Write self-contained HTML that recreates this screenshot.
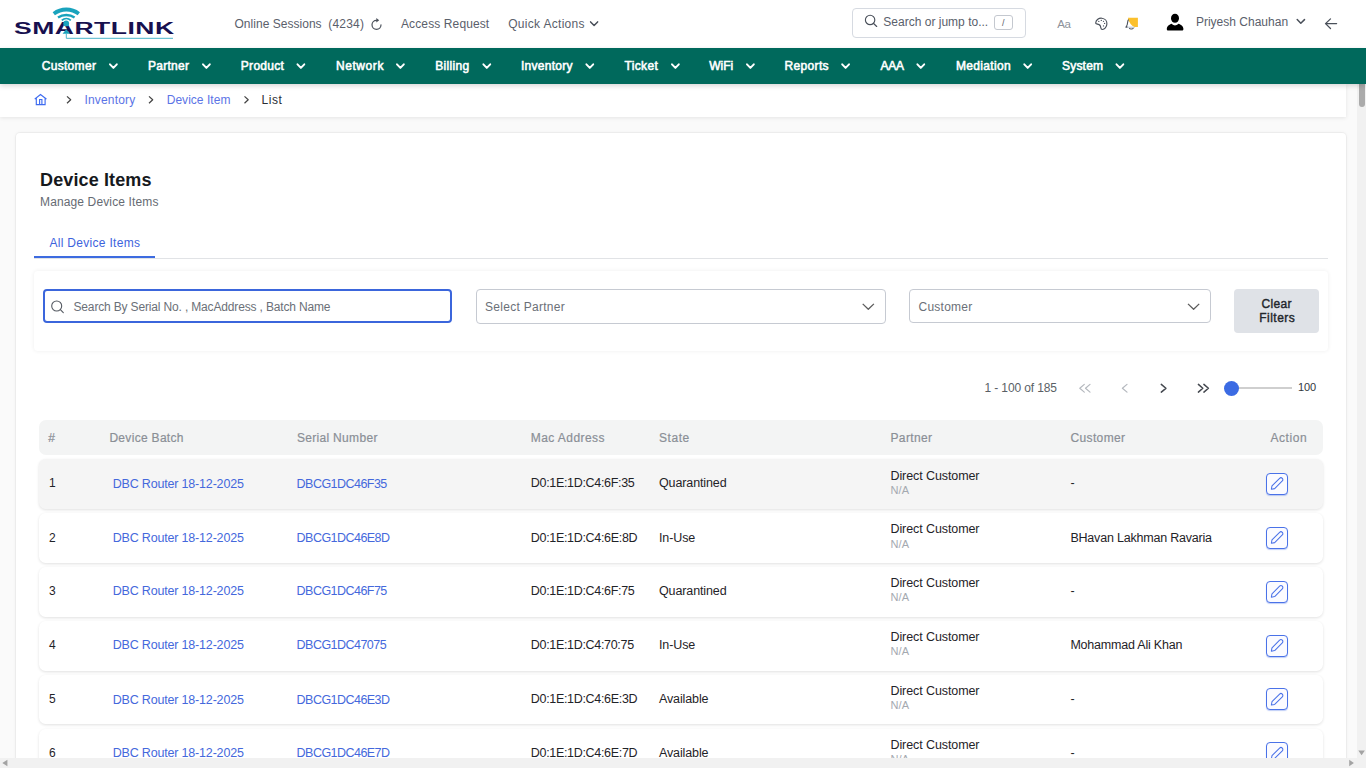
<!DOCTYPE html>
<html lang="en">
<head>
<meta charset="utf-8">
<title>Device Items</title>
<style>
*{box-sizing:border-box;margin:0;padding:0}
html,body{width:1366px;height:768px;overflow:hidden}
body{font-family:"Liberation Sans",sans-serif;background:#fafafa;color:#1f2328;position:relative;font-size:12px}
.b{position:absolute}
.t{position:absolute;white-space:pre;line-height:16px;z-index:5}
svg{position:absolute;overflow:visible}
#top{left:0;top:0;width:1366px;height:48px;background:#fff}
#nav{left:0;top:48px;width:1366px;height:36px;background:#00695c;box-shadow:0 2px 5px rgba(0,0,0,.16);z-index:3}
#crumb{left:0;top:84px;width:1346px;height:33px;background:#fff;box-shadow:0 1px 4px rgba(0,0,0,.09)}
#card{left:15.7px;top:132.8px;width:1330.4px;height:700px;background:#fff;border-radius:4px;box-shadow:0 0 0 1px rgba(0,0,0,.035),0 0 4px rgba(0,0,0,.05)}
#vs{left:1357px;top:84px;width:9px;height:674px;background:#f1f1f1;z-index:1}
#vthumb{left:1358.6px;top:80px;width:6.2px;height:27px;background:#ababab;border-radius:3px;z-index:2}
#hs{left:0;top:758px;width:1366px;height:10px;background:#f1f1f1;z-index:9}
#sbox{left:852px;top:8px;width:174px;height:30px;border:1px solid #d6dae1;border-radius:4px;background:#fff}
#kbd{left:994px;top:15px;width:19px;height:15px;border:1px solid #c4c8cf;border-radius:3px;background:#fff}
#tabline{left:34px;top:258px;width:1294px;height:1px;background:#e1e3e6}
#tabul{left:34px;top:256px;width:121px;height:2px;background:#3d6be0}
#fbox{left:33.6px;top:270.6px;width:1294.2px;height:80.2px;background:#fff;border-radius:4px;box-shadow:0 0 4px rgba(0,0,0,.075)}
#f1{left:42.6px;top:289px;width:409.4px;height:34px;border:2px solid #3b66dc;border-radius:4px;background:#fff}
#f2{left:476px;top:289px;width:410px;height:35px;border:1px solid #c6cad2;border-radius:4px;background:#fff}
#f3{left:909px;top:289px;width:302px;height:34px;border:1px solid #c6cad2;border-radius:4px;background:#fff}
#clr{left:1234px;top:289px;width:85px;height:44px;background:#dfe2e7;border-radius:4px}
#track{left:1238px;top:387px;width:54px;height:2px;background:#cfcfcf}
#thumb{left:1224px;top:381px;width:15px;height:15px;border-radius:50%;background:#3b6be3}
#logo{left:13.6px;top:18.6px;font-size:15.6px;font-weight:bold;color:#17104f;line-height:20px;letter-spacing:0.3px;transform-origin:0 0;transform:scaleX(1.70);white-space:nowrap;z-index:3}
.hdr{left:39px;top:420px;width:1284px;height:35px;background:#f3f4f4;border-radius:7px}
.row{left:39px;width:1284px;height:49.95px;background:#fff;border-radius:6.5px;box-shadow:0 1px 3px rgba(0,0,0,.12)}
.row.hov{background:#f5f5f5}
.edit{left:1266px;width:22px;height:22px;border:1px solid #4a72e8;border-radius:4px;background:#fbfbff;box-shadow:0 1px 1px rgba(74,114,232,.35)}
</style>
</head>
<body>
<div class="b" id="top"></div>
<div class="b" id="nav"></div>
<div class="b" id="crumb"></div>
<div class="b" id="card"></div>
<div class="b" id="sbox"></div>
<div class="b" id="kbd"></div>
<div class="b" id="tabline"></div>
<div class="b" id="tabul"></div>
<div class="b" id="fbox"></div>
<div class="b" id="f1"></div>
<div class="b" id="f2"></div>
<div class="b" id="f3"></div>
<div class="b" id="clr"></div>
<div class="b" id="track"></div>
<div class="b" id="thumb"></div>
<div class="b hdr"></div>
<div class="b" id="logo">SMARTLINK</div>
<div class="b row hov" style="top:458.75px"></div><div class="b edit" style="top:472.65px"></div>
<div class="b row" style="top:512.70px"></div><div class="b edit" style="top:526.60px"></div>
<div class="b row" style="top:566.65px"></div><div class="b edit" style="top:580.55px"></div>
<div class="b row" style="top:620.60px"></div><div class="b edit" style="top:634.50px"></div>
<div class="b row" style="top:674.55px"></div><div class="b edit" style="top:688.45px"></div>
<div class="b row" style="top:728.50px"></div><div class="b edit" style="top:742.40px"></div>
<svg width="1366" height="768" viewBox="0 0 1366 768" style="left:0;top:0;z-index:4" fill="none" stroke-linecap="round" stroke-linejoin="round">
<g id="logo-mark" stroke="#19a3bd" stroke-linecap="butt">
<path d="M53.8 13.7 A20.7 20.7 0 0 1 78.8 13.7" stroke-width="3.8"/>
<path d="M58 17.6 A14.5 14.5 0 0 1 74.6 17.6" stroke-width="2.4"/>
<path d="M61.8 20.3 A6.8 6.8 0 0 1 70.8 20.3" stroke-width="1.8"/>
<circle cx="66.2" cy="23.4" r="2.9" fill="#19a3bd" stroke="none"/>
<path d="M66.3 29.2 L70.2 33.8 L62.5 33.8 Z" fill="#19a3bd" stroke="none"/>
<path d="M66.3 33.5 V38.3 H173" stroke="#4ab4ca" stroke-width="1"/>
</g>
<path d="M381 24.8 A4.5 4.5 0 1 1 376.5 20.3" stroke="#4a505a" stroke-width="1.2"/>
<path d="M376.3 18.1 L379.2 20.3 L376.3 22.6 Z" fill="#4a505a" stroke="none"/>
<path d="M590.6 21.9 L594.1 25.5 L597.6 21.9" stroke="#4a505a" stroke-width="1.5"/>
<circle cx="870.1" cy="19.9" r="4.7" stroke="#4a505a" stroke-width="1.15"/><path d="M873.6 23.5 L876.7 26.5" stroke="#4a505a" stroke-width="1.15"/>
<path d="M1095.7 23 C1095.9 19.6 1099 17.9 1101.8 18.2 C1105 18.5 1107.1 20.9 1106.9 24 C1106.7 27 1104.5 29.3 1102.4 29.5 C1100.7 29.6 1100.9 27.8 1100.5 26.3 C1100.1 24.7 1098.5 24.2 1096.7 23.9 C1096 23.8 1095.7 23.5 1095.7 23 Z" stroke="#4a505a" stroke-width="1.15"/>
<circle cx="1101.3" cy="20.4" r=".65" fill="#4a505a"/>
<circle cx="1098.8" cy="21.4" r=".65" fill="#4a505a"/>
<circle cx="1103.5" cy="21.3" r=".65" fill="#4a505a"/>
<circle cx="1104.6" cy="23.4" r=".65" fill="#4a505a"/>
<circle cx="1103.5" cy="25.9" r=".65" fill="#4a505a"/>
<path d="M1131.5 18.6 C1128.7 18.6 1127.7 20.5 1127.6 22.5 C1127.5 24.6 1127.1 26 1125.9 27.1 H1127.4 M1129.5 28.2 C1130 29.3 1132.6 29.3 1133.2 28.2" stroke="#4a505a" stroke-width="1.1"/>
<path d="M1127.4 27.2 H1134.5" stroke="#b9c1cf" stroke-width="1"/>
<path d="M1128 17.8 H1137.9 V27.1 H1134.6 C1131.3 25.6 1129 22.5 1128.3 19 Z" fill="#fbc02d"/>
<ellipse cx="1175" cy="18.2" rx="4" ry="4.55" fill="#000"/>
<path d="M1166.8 29 C1166.8 26 1169.5 24.3 1171.7 23.7 C1172.7 25 1174 25.4 1175 25.4 C1176 25.4 1177.4 25 1178.4 23.7 C1180.7 24.3 1183.4 26 1183.4 29 C1183.4 30 1182.8 30.5 1182 30.5 L1168.2 30.5 C1167.4 30.5 1166.8 30 1166.8 29Z" fill="#000"/>
<path d="M1297.2 19.6 L1300.8 23.3 L1304.5 19.6" stroke="#4a505a" stroke-width="1.5"/>
<path d="M1336.6 23.6 H1325.6 M1330.5 18.9 L1325.5 23.6 L1330.5 28.5" stroke="#4a505a" stroke-width="1.3"/>
<path d="M110.0 64.3 L113.4 67.9 L116.8 64.3" stroke="#fff" stroke-width="1.95"/>
<path d="M203.0 64.3 L206.4 67.9 L209.8 64.3" stroke="#fff" stroke-width="1.95"/>
<path d="M297.5 64.3 L300.9 67.9 L304.3 64.3" stroke="#fff" stroke-width="1.95"/>
<path d="M397.0 64.3 L400.4 67.9 L403.8 64.3" stroke="#fff" stroke-width="1.95"/>
<path d="M483.4 64.3 L486.8 67.9 L490.2 64.3" stroke="#fff" stroke-width="1.95"/>
<path d="M586.4 64.3 L589.8 67.9 L593.2 64.3" stroke="#fff" stroke-width="1.95"/>
<path d="M672.0 64.3 L675.4 67.9 L678.8 64.3" stroke="#fff" stroke-width="1.95"/>
<path d="M747.0 64.3 L750.4 67.9 L753.8 64.3" stroke="#fff" stroke-width="1.95"/>
<path d="M842.2 64.3 L845.6 67.9 L849.0 64.3" stroke="#fff" stroke-width="1.95"/>
<path d="M917.4 64.3 L920.8 67.9 L924.2 64.3" stroke="#fff" stroke-width="1.95"/>
<path d="M1024.3 64.3 L1027.7 67.9 L1031.1 64.3" stroke="#fff" stroke-width="1.95"/>
<path d="M1116.5 64.3 L1119.9 67.9 L1123.3 64.3" stroke="#fff" stroke-width="1.95"/>
<path d="M35.2 98.8 L40.5 94.5 L46 98.8 M36.3 98.2 V104.6 H45.1 V98.2 M39.6 104.4 V99.5 H41.9 V104.4" stroke="#3f6cf0" stroke-width="1.15" stroke-linecap="square" stroke-linejoin="miter"/>
<path d="M67 96.4 L70.7 99.8 L67 103.3" stroke="#444" stroke-width="1.2" stroke-linecap="butt"/>
<path d="M149 96.4 L152.7 99.8 L149 103.3" stroke="#444" stroke-width="1.2" stroke-linecap="butt"/>
<path d="M244.5 96.4 L248.2 99.8 L244.5 103.3" stroke="#444" stroke-width="1.2" stroke-linecap="butt"/>
<circle cx="56.7" cy="306" r="5" stroke="#555a62" stroke-width="1.1"/><path d="M60.4 309.7 L63.3 312.6" stroke="#555a62" stroke-width="1.1"/>
<path d="M862.7 303.9 L868.3 309.3 L873.9 303.9" stroke="#5c5c5c" stroke-width="1.3" stroke-linecap="butt"/>
<path d="M1188 303.9 L1193.6 309.3 L1199.2 303.9" stroke="#5c5c5c" stroke-width="1.3" stroke-linecap="butt"/>
<path d="M1084.3 384.4 L1079.8 388.3 L1084.3 392.1 M1090 384.4 L1085.5 388.3 L1090 392.1 M1127 384.4 L1122.4 388.3 L1127 392.1" stroke="#b4b8be" stroke-width="1.2"/>
<path d="M1161.3 384.4 L1165.9 388.3 L1161.3 392.1 M1198.4 384.4 L1202.8 388.3 L1198.4 392.1 M1203.9 384.4 L1208.4 388.3 L1203.9 392.1" stroke="#44484f" stroke-width="1.5"/>
<g transform="translate(1277 483.6) rotate(-45)"><path d="M-8 0 L-5.2 -1.9 H5.6 A1.9 1.9 0 0 1 5.6 1.9 H-5.2 Z" stroke="#4a72e8" stroke-width="1.05"/></g>
<g transform="translate(1277 537.6) rotate(-45)"><path d="M-8 0 L-5.2 -1.9 H5.6 A1.9 1.9 0 0 1 5.6 1.9 H-5.2 Z" stroke="#4a72e8" stroke-width="1.05"/></g>
<g transform="translate(1277 591.5) rotate(-45)"><path d="M-8 0 L-5.2 -1.9 H5.6 A1.9 1.9 0 0 1 5.6 1.9 H-5.2 Z" stroke="#4a72e8" stroke-width="1.05"/></g>
<g transform="translate(1277 645.5) rotate(-45)"><path d="M-8 0 L-5.2 -1.9 H5.6 A1.9 1.9 0 0 1 5.6 1.9 H-5.2 Z" stroke="#4a72e8" stroke-width="1.05"/></g>
<g transform="translate(1277 699.4) rotate(-45)"><path d="M-8 0 L-5.2 -1.9 H5.6 A1.9 1.9 0 0 1 5.6 1.9 H-5.2 Z" stroke="#4a72e8" stroke-width="1.05"/></g>
<g transform="translate(1277 753.4) rotate(-45)"><path d="M-8 0 L-5.2 -1.9 H5.6 A1.9 1.9 0 0 1 5.6 1.9 H-5.2 Z" stroke="#4a72e8" stroke-width="1.05"/></g>
</svg>
<span class="t" style="left:234.5px;top:16.1px;font-size:12px;color:#5a606b;letter-spacing:0.027px">Online Sessions</span>
<span class="t" style="left:328.2px;top:16.1px;font-size:12px;color:#5a606b;letter-spacing:0.223px">(4234)</span>
<span class="t" style="left:401.0px;top:16.1px;font-size:12px;color:#5a606b;letter-spacing:0.114px">Access Request</span>
<span class="t" style="left:508.2px;top:16.1px;font-size:12px;color:#5a606b;letter-spacing:0.308px">Quick Actions</span>
<span class="t" style="left:883.3px;top:14.1px;font-size:12px;color:#5a606b;letter-spacing:0.01px">Search or jump to...</span>
<span class="t" style="left:1002.0px;top:15.1px;font-size:9px;color:#5a606b;letter-spacing:0.984px">/</span>
<span class="t" style="left:1057.2px;top:16.3px;font-size:11.5px;color:#8d929a;letter-spacing:-0.278px">Aa</span>
<span class="t" style="left:1195.9px;top:14.1px;font-size:12px;color:#5a606b;letter-spacing:0.01px">Priyesh Chauhan</span>
<span class="t" style="left:41.7px;top:58.1px;font-size:12px;color:#ffffff;letter-spacing:0.312px;-webkit-text-stroke:0.55px #ffffff">Customer</span>
<span class="t" style="left:148.0px;top:58.1px;font-size:12px;color:#ffffff;letter-spacing:0.273px;-webkit-text-stroke:0.55px #ffffff">Partner</span>
<span class="t" style="left:240.8px;top:58.1px;font-size:12px;color:#ffffff;letter-spacing:0.29px;-webkit-text-stroke:0.55px #ffffff">Product</span>
<span class="t" style="left:336.0px;top:58.1px;font-size:12px;color:#ffffff;letter-spacing:0.564px;-webkit-text-stroke:0.55px #ffffff">Network</span>
<span class="t" style="left:435.2px;top:58.1px;font-size:12px;color:#ffffff;letter-spacing:0.331px;-webkit-text-stroke:0.55px #ffffff">Billing</span>
<span class="t" style="left:521.0px;top:58.1px;font-size:12px;color:#ffffff;letter-spacing:0.28px;-webkit-text-stroke:0.55px #ffffff">Inventory</span>
<span class="t" style="left:624.4px;top:58.1px;font-size:12px;color:#ffffff;letter-spacing:0.367px;-webkit-text-stroke:0.55px #ffffff">Ticket</span>
<span class="t" style="left:709.3px;top:58.1px;font-size:12px;color:#ffffff;letter-spacing:0.0px;-webkit-text-stroke:0.55px #ffffff">WiFi</span>
<span class="t" style="left:784.6px;top:58.1px;font-size:12px;color:#ffffff;letter-spacing:0.328px;-webkit-text-stroke:0.55px #ffffff">Reports</span>
<span class="t" style="left:880.4px;top:58.1px;font-size:12px;color:#ffffff;letter-spacing:-0.158px;-webkit-text-stroke:0.55px #ffffff">AAA</span>
<span class="t" style="left:956.0px;top:58.1px;font-size:12px;color:#ffffff;letter-spacing:0.334px;-webkit-text-stroke:0.55px #ffffff">Mediation</span>
<span class="t" style="left:1062.0px;top:58.1px;font-size:12px;color:#ffffff;letter-spacing:0.197px;-webkit-text-stroke:0.55px #ffffff">System</span>
<span class="t" style="left:84.4px;top:92.1px;font-size:12px;color:#5b74e6;letter-spacing:0.193px">Inventory</span>
<span class="t" style="left:166.7px;top:92.1px;font-size:12px;color:#5b74e6;letter-spacing:0.034px">Device Item</span>
<span class="t" style="left:261.6px;top:92.1px;font-size:12px;color:#2a2e34;letter-spacing:0.504px">List</span>
<span class="t" style="left:40.0px;top:172.0px;font-size:18px;color:#16191d;letter-spacing:0.129px;font-weight:bold">Device Items</span>
<span class="t" style="left:40.0px;top:194.1px;font-size:12px;color:#666b73;letter-spacing:0.13px">Manage Device Items</span>
<span class="t" style="left:49.5px;top:235.1px;font-size:12px;color:#3d63dd;letter-spacing:0.298px">All Device Items</span>
<span class="t" style="left:73.5px;top:299.1px;font-size:12px;color:#6b7078;letter-spacing:-0.158px">Search By Serial No. , MacAddress , Batch Name</span>
<span class="t" style="left:485.1px;top:299.1px;font-size:12px;color:#6b7078;letter-spacing:0.273px">Select Partner</span>
<span class="t" style="left:918.5px;top:299.1px;font-size:12px;color:#6b7078;letter-spacing:0.255px">Customer</span>
<span class="t" style="left:1261.6px;top:296.1px;font-size:12px;color:#22262b;letter-spacing:0.328px;-webkit-text-stroke:0.4px #22262b">Clear</span>
<span class="t" style="left:1259.3px;top:310.1px;font-size:12px;color:#22262b;letter-spacing:0.471px;-webkit-text-stroke:0.4px #22262b">Filters</span>
<span class="t" style="left:984.5px;top:380.1px;font-size:12px;color:#5a5f66;letter-spacing:-0.12px">1 - 100 of 185</span>
<span class="t" style="left:1298.0px;top:379.0px;font-size:11px;color:#33373d;letter-spacing:-0.18px">100</span>
<span class="t" style="left:48.2px;top:430.1px;font-size:12px;color:#8a8f96;letter-spacing:-0.488px;-webkit-text-stroke:0.2px #8a8f96">#</span>
<span class="t" style="left:109.4px;top:430.1px;font-size:12px;color:#8a8f96;letter-spacing:0.309px;-webkit-text-stroke:0.2px #8a8f96">Device Batch</span>
<span class="t" style="left:296.9px;top:430.1px;font-size:12px;color:#8a8f96;letter-spacing:0.316px;-webkit-text-stroke:0.2px #8a8f96">Serial Number</span>
<span class="t" style="left:530.8px;top:430.1px;font-size:12px;color:#8a8f96;letter-spacing:0.433px;-webkit-text-stroke:0.2px #8a8f96">Mac Address</span>
<span class="t" style="left:659.0px;top:430.1px;font-size:12px;color:#8a8f96;letter-spacing:0.542px;-webkit-text-stroke:0.2px #8a8f96">State</span>
<span class="t" style="left:890.5px;top:430.1px;font-size:12px;color:#8a8f96;letter-spacing:0.357px;-webkit-text-stroke:0.2px #8a8f96">Partner</span>
<span class="t" style="left:1070.4px;top:430.1px;font-size:12px;color:#8a8f96;letter-spacing:0.383px;-webkit-text-stroke:0.2px #8a8f96">Customer</span>
<span class="t" style="left:1270.4px;top:430.1px;font-size:12px;color:#8a8f96;letter-spacing:0.568px;-webkit-text-stroke:0.2px #8a8f96">Action</span>
<span class="t" style="left:48.9px;top:475.1px;font-size:12px;color:#1f2328;letter-spacing:0.0px">1</span>
<span class="t" style="left:112.7px;top:475.9px;font-size:12.5px;color:#4468dc;letter-spacing:-0.18px">DBC Router 18-12-2025</span>
<span class="t" style="left:296.6px;top:475.9px;font-size:12.5px;color:#4468dc;letter-spacing:-0.534px">DBCG1DC46F35</span>
<span class="t" style="left:530.8px;top:474.9px;font-size:12.5px;color:#1f2328;letter-spacing:-0.318px">D0:1E:1D:C4:6F:35</span>
<span class="t" style="left:659.0px;top:474.9px;font-size:12.5px;color:#1f2328;letter-spacing:-0.121px">Quarantined</span>
<span class="t" style="left:890.5px;top:467.9px;font-size:12.5px;color:#1f2328;letter-spacing:-0.093px">Direct Customer</span>
<span class="t" style="left:890.5px;top:482.4px;font-size:11px;color:#a4a9b0;letter-spacing:0.078px">N/A</span>
<span class="t" style="left:1070.4px;top:474.9px;font-size:12.5px;color:#1f2328;letter-spacing:-0.206px">-</span>
<span class="t" style="left:48.9px;top:530.1px;font-size:12px;color:#1f2328;letter-spacing:0.0px">2</span>
<span class="t" style="left:112.7px;top:529.9px;font-size:12.5px;color:#4468dc;letter-spacing:-0.18px">DBC Router 18-12-2025</span>
<span class="t" style="left:296.6px;top:529.9px;font-size:12.5px;color:#4468dc;letter-spacing:-0.534px">DBCG1DC46E8D</span>
<span class="t" style="left:530.8px;top:529.9px;font-size:12.5px;color:#1f2328;letter-spacing:-0.318px">D0:1E:1D:C4:6E:8D</span>
<span class="t" style="left:659.0px;top:529.9px;font-size:12.5px;color:#1f2328;letter-spacing:-0.121px">In-Use</span>
<span class="t" style="left:890.5px;top:520.9px;font-size:12.5px;color:#1f2328;letter-spacing:-0.093px">Direct Customer</span>
<span class="t" style="left:890.5px;top:536.4px;font-size:11px;color:#a4a9b0;letter-spacing:0.078px">N/A</span>
<span class="t" style="left:1070.4px;top:529.9px;font-size:12.5px;color:#1f2328;letter-spacing:-0.206px">BHavan Lakhman Ravaria</span>
<span class="t" style="left:48.9px;top:583.1px;font-size:12px;color:#1f2328;letter-spacing:0.0px">3</span>
<span class="t" style="left:112.7px;top:582.9px;font-size:12.5px;color:#4468dc;letter-spacing:-0.18px">DBC Router 18-12-2025</span>
<span class="t" style="left:296.6px;top:582.9px;font-size:12.5px;color:#4468dc;letter-spacing:-0.534px">DBCG1DC46F75</span>
<span class="t" style="left:530.8px;top:582.9px;font-size:12.5px;color:#1f2328;letter-spacing:-0.318px">D0:1E:1D:C4:6F:75</span>
<span class="t" style="left:659.0px;top:582.9px;font-size:12.5px;color:#1f2328;letter-spacing:-0.121px">Quarantined</span>
<span class="t" style="left:890.5px;top:574.9px;font-size:12.5px;color:#1f2328;letter-spacing:-0.093px">Direct Customer</span>
<span class="t" style="left:890.5px;top:589.4px;font-size:11px;color:#a4a9b0;letter-spacing:0.078px">N/A</span>
<span class="t" style="left:1070.4px;top:582.9px;font-size:12.5px;color:#1f2328;letter-spacing:-0.206px">-</span>
<span class="t" style="left:48.9px;top:637.1px;font-size:12px;color:#1f2328;letter-spacing:0.0px">4</span>
<span class="t" style="left:112.7px;top:636.9px;font-size:12.5px;color:#4468dc;letter-spacing:-0.18px">DBC Router 18-12-2025</span>
<span class="t" style="left:296.6px;top:636.9px;font-size:12.5px;color:#4468dc;letter-spacing:-0.534px">DBCG1DC47075</span>
<span class="t" style="left:530.8px;top:636.9px;font-size:12.5px;color:#1f2328;letter-spacing:-0.318px">D0:1E:1D:C4:70:75</span>
<span class="t" style="left:659.0px;top:636.9px;font-size:12.5px;color:#1f2328;letter-spacing:-0.121px">In-Use</span>
<span class="t" style="left:890.5px;top:628.9px;font-size:12.5px;color:#1f2328;letter-spacing:-0.093px">Direct Customer</span>
<span class="t" style="left:890.5px;top:643.4px;font-size:11px;color:#a4a9b0;letter-spacing:0.078px">N/A</span>
<span class="t" style="left:1070.4px;top:636.9px;font-size:12.5px;color:#1f2328;letter-spacing:-0.206px">Mohammad Ali Khan</span>
<span class="t" style="left:48.9px;top:691.1px;font-size:12px;color:#1f2328;letter-spacing:0.0px">5</span>
<span class="t" style="left:112.7px;top:691.9px;font-size:12.5px;color:#4468dc;letter-spacing:-0.18px">DBC Router 18-12-2025</span>
<span class="t" style="left:296.6px;top:691.9px;font-size:12.5px;color:#4468dc;letter-spacing:-0.534px">DBCG1DC46E3D</span>
<span class="t" style="left:530.8px;top:690.9px;font-size:12.5px;color:#1f2328;letter-spacing:-0.318px">D0:1E:1D:C4:6E:3D</span>
<span class="t" style="left:659.0px;top:690.9px;font-size:12.5px;color:#1f2328;letter-spacing:-0.121px">Available</span>
<span class="t" style="left:890.5px;top:682.9px;font-size:12.5px;color:#1f2328;letter-spacing:-0.093px">Direct Customer</span>
<span class="t" style="left:890.5px;top:697.4px;font-size:11px;color:#a4a9b0;letter-spacing:0.078px">N/A</span>
<span class="t" style="left:1070.4px;top:690.9px;font-size:12.5px;color:#1f2328;letter-spacing:-0.206px">-</span>
<span class="t" style="left:48.9px;top:745.1px;font-size:12px;color:#1f2328;letter-spacing:0.0px">6</span>
<span class="t" style="left:112.7px;top:744.9px;font-size:12.5px;color:#4468dc;letter-spacing:-0.18px">DBC Router 18-12-2025</span>
<span class="t" style="left:296.6px;top:744.9px;font-size:12.5px;color:#4468dc;letter-spacing:-0.534px">DBCG1DC46E7D</span>
<span class="t" style="left:530.8px;top:744.9px;font-size:12.5px;color:#1f2328;letter-spacing:-0.318px">D0:1E:1D:C4:6E:7D</span>
<span class="t" style="left:659.0px;top:744.9px;font-size:12.5px;color:#1f2328;letter-spacing:-0.121px">Available</span>
<span class="t" style="left:890.5px;top:736.9px;font-size:12.5px;color:#1f2328;letter-spacing:-0.093px">Direct Customer</span>
<span class="t" style="left:890.5px;top:751.4px;font-size:11px;color:#a4a9b0;letter-spacing:0.078px">N/A</span>
<span class="t" style="left:1070.4px;top:744.9px;font-size:12.5px;color:#1f2328;letter-spacing:-0.206px">-</span>
<div class="b" id="vs"></div>
<div class="b" id="vthumb"></div>
<div class="b" id="hs"></div>
<svg width="1366" height="768" viewBox="0 0 1366 768" style="left:0;top:0;z-index:10"><path d="M2.3 763 L7.4 759.7 V766.2 Z M1353.9 763 L1349.2 759.8 V766.2 Z M1361.6 755.3 L1358.3 750.6 H1364.9 Z" fill="#a3a3a3"/></svg>
</body>
</html>
